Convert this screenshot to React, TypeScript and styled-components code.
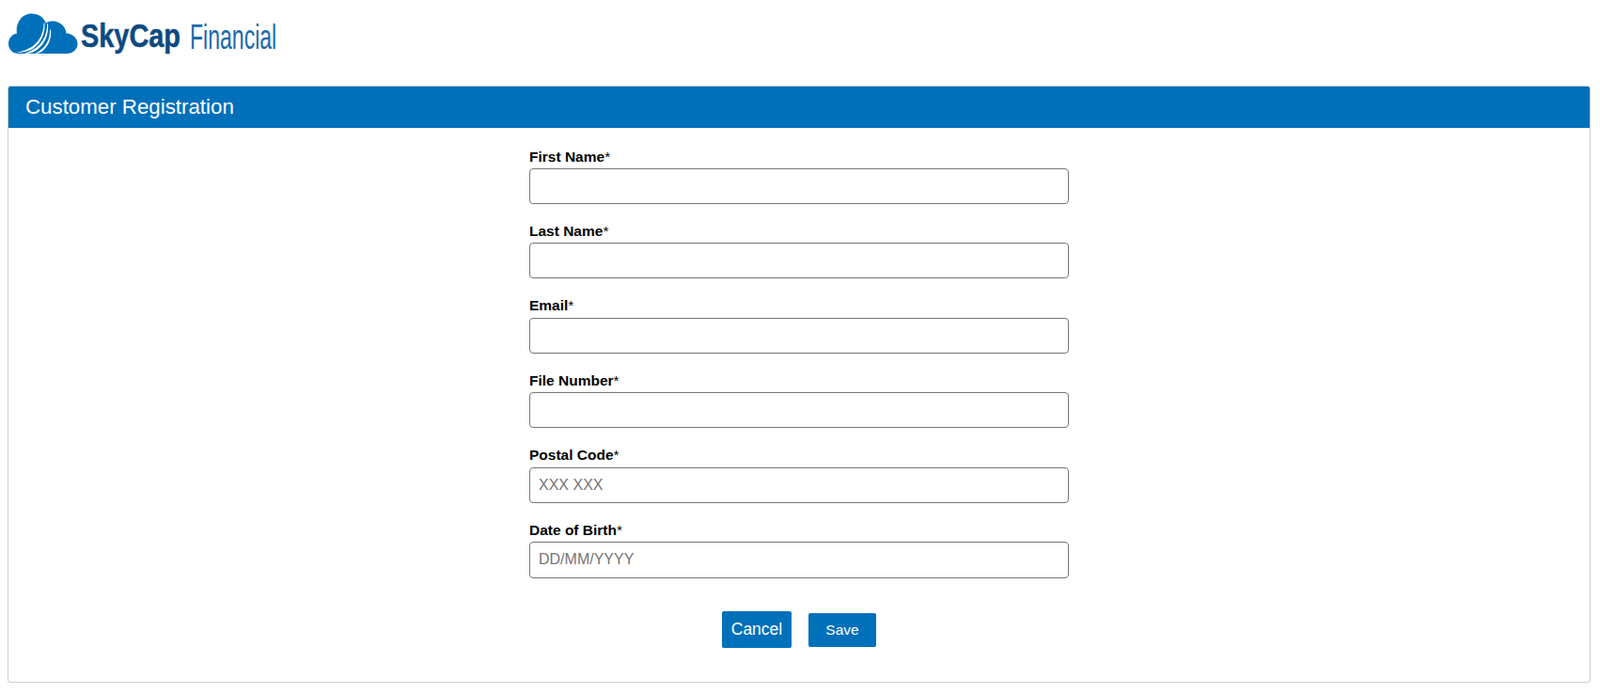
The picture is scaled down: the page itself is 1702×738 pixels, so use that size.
import React from 'react'
import styled, { createGlobalStyle } from 'styled-components'

const GlobalStyle = createGlobalStyle`
  html, body {
    margin: 0;
    padding: 0;
    background: #fff;
    font-family: "Liberation Sans", Arial, sans-serif;
  }
`

const Page = styled.div`
  padding: 0 10px 12px 8px;
`

const LogoBar = styled.div`
  height: 91px;
  display: flex;
  align-items: flex-start;
  padding-top: 14px;
  box-sizing: border-box;
`

const Wordmark = styled.div`
  display: flex;
  align-items: flex-start;
  margin-left: 3px;
  height: 44px;
  white-space: nowrap;
`

const BrandName = styled.span`
  display: inline-block;
  width: 116px;
  margin-top: 2px;
  font-size: 35px;
  line-height: 44px;
  font-weight: 700;
  color: #0c4a80;
  -webkit-text-stroke: 0.5px #0c4a80;
  transform: scaleX(0.825);
  transform-origin: left center;
`

const BrandSuffix = styled.span`
  display: inline-block;
  margin-top: 3.5px;
  font-size: 36px;
  line-height: 44px;
  color: #1a6cab;
  transform: scaleX(0.64);
  transform-origin: left center;
`

const Panel = styled.section`
  border: 1px solid #ccc;
  border-radius: 3px;
  height: 635px;
  box-sizing: border-box;
  overflow: hidden;
`

const PanelHeader = styled.h1`
  margin: 0;
  height: 44px;
  padding-left: 18px;
  background: #0070ba;
  color: #fff;
  font-size: 22.3px;
  font-weight: 400;
  line-height: 43px;
`

const Form = styled.form`
  width: 574px;
  margin: 0 auto;
  padding-top: 21.6px;
  display: flex;
  flex-direction: column;
`

const Field = styled.div`
  margin-bottom: 20px;

  &:nth-child(6) {
    margin-bottom: 19px;
  }

  &:nth-child(6) input {
    height: 39px;
  }
`

const Label = styled.label`
  display: block;
  height: 21.4px;
  font-size: 15.5px;
  font-weight: 700;
  line-height: 18px;
  color: #000;
`

const Required = styled.span`
  font-weight: 400;
`

const Input = styled.input`
  display: block;
  width: 100%;
  height: 38px;
  box-sizing: border-box;
  padding: 0 9px;
  border: 1px solid #767676;
  border-radius: 4px;
  background: #fff;
  font-family: inherit;
  font-size: 16px;

  &::placeholder {
    color: #757575;
  }
`

const Actions = styled.div`
  display: flex;
  justify-content: center;
  align-items: center;
  gap: 18px;
  margin-top: 16.4px;
`

const Button = styled.button<{ $large?: boolean }>`
  width: ${p => (p.$large ? '74px' : '72px')};
  height: ${p => (p.$large ? '39px' : '36px')};
  padding: 0;
  border: 0;
  border-radius: 2px;
  background: #0070ba;
  color: #fff;
  font-family: inherit;
  font-size: ${p => (p.$large ? '17.5px' : '15.5px')};
`

const CloudLogo = () => (
  <svg width="75" height="44" viewBox="8 14 75 44" aria-hidden="true">
    <path
      fill="#0070ba"
      d="M20 57 C13 57 9 52 9 46.5 C9 40.5 13 36.5 18 35.5 C16.5 24 23.5 14.5 33.5 14.5 C41 14.5 46 18 49 24.5 C52 22.5 56 22 60 23 C66.5 25 70 30 70.5 35.5 C77 35.5 82.5 40.5 82.5 46.5 C82.5 52.5 77.5 57 71 57 Z"
    />
    <g fill="#fff">
      <path d="M46.5 24.5 C46.5 34 43 43 35 49 C30 52.5 25 54.5 17 56 C25 56 31 54.5 36 51 C44 45 48 36 47.5 24.5 Z" />
      <path d="M50 25 C50.5 35 46.5 45 38 51 C34 53.5 30 55.5 26 57 C32 57 36 55.5 40 52.5 C48 46.5 52 36 51 25.5 Z" />
      <path d="M53 31 C53.5 40 50 48 44 52.5 C41.5 54.5 39 56 37 57 C41 57 44 55.5 46 53.5 C52 48 55 40 54 32 Z" />
    </g>
  </svg>
)

const fields = [
  { name: 'First Name' },
  { name: 'Last Name' },
  { name: 'Email' },
  { name: 'File Number' },
  { name: 'Postal Code', placeholder: 'XXX XXX' },
  { name: 'Date of Birth', placeholder: 'DD/MM/YYYY' },
]

export default function App() {
  return (
    <Page>
      <GlobalStyle />
      <LogoBar>
        <CloudLogo />
        <Wordmark>
          <BrandName>SkyCap</BrandName>
          <BrandSuffix>Financial</BrandSuffix>
        </Wordmark>
      </LogoBar>
      <Panel>
        <PanelHeader>Customer Registration</PanelHeader>
        <Form onSubmit={e => e.preventDefault()}>
          {fields.map(f => (
            <Field key={f.name}>
              <Label>
                {f.name}
                <Required>*</Required>
              </Label>
              <Input type="text" placeholder={f.placeholder} />
            </Field>
          ))}
          <Actions>
            <Button type="button" $large>Cancel</Button>
            <Button type="submit">Save</Button>
          </Actions>
        </Form>
      </Panel>
    </Page>
  )
}
